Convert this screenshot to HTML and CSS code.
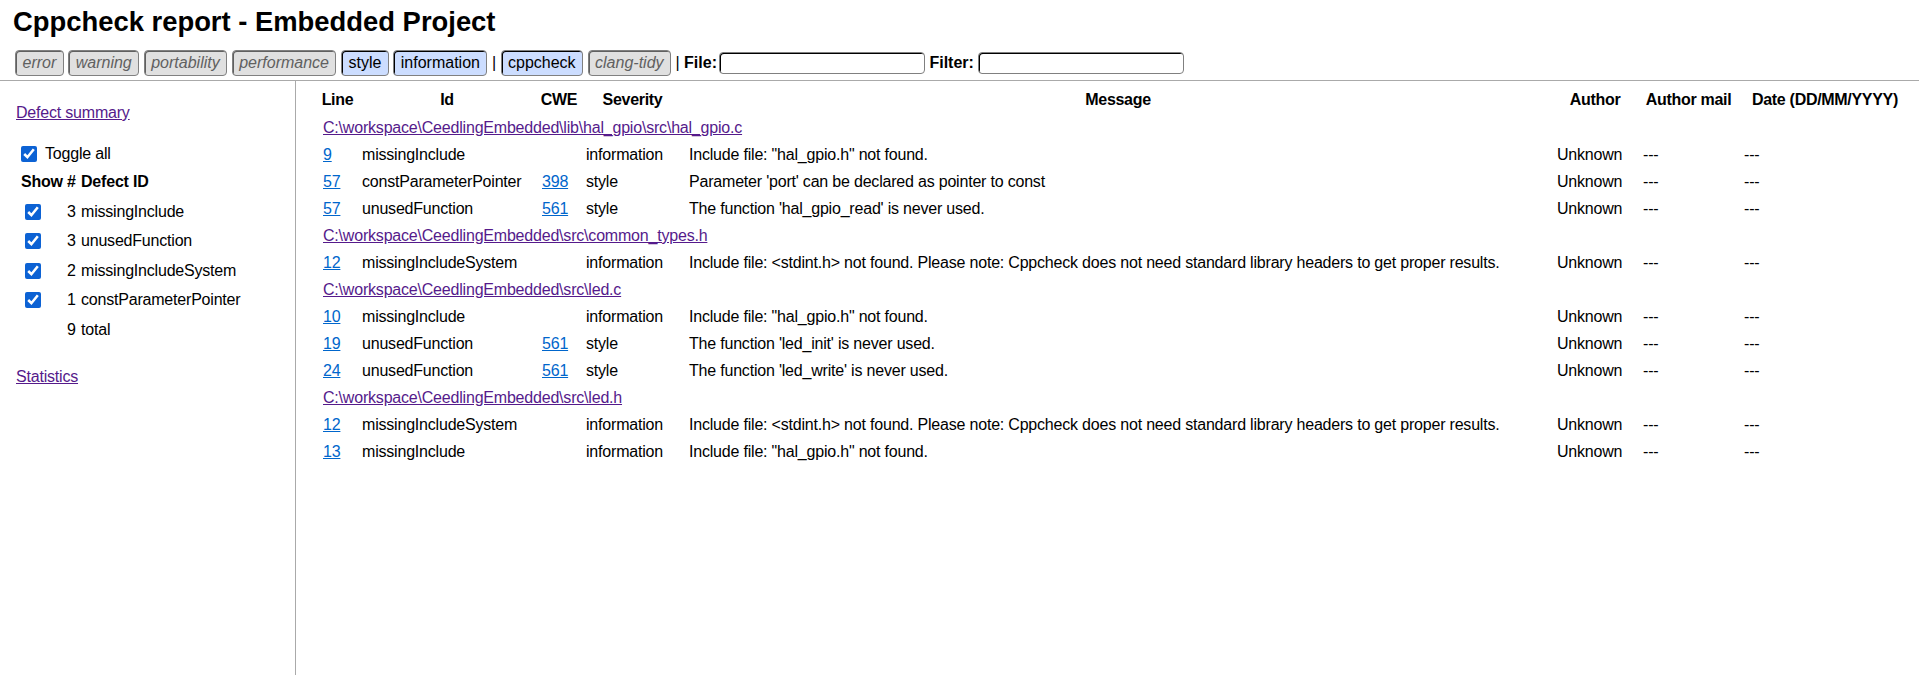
FILE: index.html
```html
<!DOCTYPE html>
<html lang="en">
<head>
<meta charset="utf-8">
<title>Cppcheck report - Embedded Project</title>
<link rel="stylesheet" href="styles.css">
</head>
<body>
<div class="wrapper">
  <header class="header">
    <h1 class="title">Cppcheck report - Embedded Project</h1>
    <div class="toolbar"><label class="check-btn disabled">error</label> <label class="check-btn disabled">warning</label> <label class="check-btn disabled">portability</label> <label class="check-btn disabled">performance</label> <label class="check-btn">style</label> <label class="check-btn">information</label> | <label class="check-btn">cppcheck</label> <label class="check-btn disabled">clang-tidy</label> | <label class="field-label">File:<input class="text-input" type="text"></label> <label class="field-label">Filter:<input class="text-input" type="text"></label></div>
  </header>

  <nav class="menu">
    <p class="menu-link"><a class="visited" href="#summary">Defect summary</a></p>
    <div class="toggle-row"><input class="check" type="checkbox" checked><span>Toggle all</span></div>
    <table class="defects">
      <colgroup><col class="d-col1"><col class="d-col2"><col class="d-col3"></colgroup>
      <tr class="d-head"><th>Show</th><th>#</th><th>Defect ID</th></tr>
      <tr class="d-row"><td><input class="check" type="checkbox" checked></td><td>3</td><td>missingInclude</td></tr>
      <tr class="d-row"><td><input class="check" type="checkbox" checked></td><td>3</td><td>unusedFunction</td></tr>
      <tr class="d-row"><td><input class="check" type="checkbox" checked></td><td>2</td><td>missingIncludeSystem</td></tr>
      <tr class="d-row"><td><input class="check" type="checkbox" checked></td><td>1</td><td>constParameterPointer</td></tr>
      <tr class="d-row"><td></td><td>9</td><td>total</td></tr>
    </table>
    <p class="menu-link stats"><a class="visited" href="#stats">Statistics</a></p>
  </nav>

  <main class="content">
    <table class="report">
      <colgroup>
        <col class="c-line"><col class="c-id"><col class="c-cwe"><col class="c-sev"><col class="c-msg"><col class="c-author"><col class="c-mail"><col class="c-date">
      </colgroup>
      <thead>
        <tr class="head-row"><th>Line</th><th>Id</th><th>CWE</th><th>Severity</th><th>Message</th><th>Author</th><th>Author mail</th><th>Date (DD/MM/YYYY)</th></tr>
      </thead>
      <tbody>
        <tr class="file-row"><td colspan="8"><a class="visited" href="#f0">C:\workspace\CeedlingEmbedded\lib\hal_gpio\src\hal_gpio.c</a></td></tr>
        <tr><td><a class="num" href="#l9">9</a></td><td>missingInclude</td><td></td><td>information</td><td>Include file: "hal_gpio.h" not found.</td><td>Unknown</td><td>---</td><td>---</td></tr>
        <tr><td><a class="num" href="#l57">57</a></td><td>constParameterPointer</td><td><a class="num" href="#cwe398">398</a></td><td>style</td><td>Parameter 'port' can be declared as pointer to const</td><td>Unknown</td><td>---</td><td>---</td></tr>
        <tr><td><a class="num" href="#l57b">57</a></td><td>unusedFunction</td><td><a class="num" href="#cwe561">561</a></td><td>style</td><td>The function 'hal_gpio_read' is never used.</td><td>Unknown</td><td>---</td><td>---</td></tr>
        <tr class="file-row"><td colspan="8"><a class="visited" href="#f1">C:\workspace\CeedlingEmbedded\src\common_types.h</a></td></tr>
        <tr><td><a class="num" href="#l12">12</a></td><td>missingIncludeSystem</td><td></td><td>information</td><td>Include file: &lt;stdint.h&gt; not found. Please note: Cppcheck does not need standard library headers to get proper results.</td><td>Unknown</td><td>---</td><td>---</td></tr>
        <tr class="file-row"><td colspan="8"><a class="visited" href="#f2">C:\workspace\CeedlingEmbedded\src\led.c</a></td></tr>
        <tr><td><a class="num" href="#l10">10</a></td><td>missingInclude</td><td></td><td>information</td><td>Include file: "hal_gpio.h" not found.</td><td>Unknown</td><td>---</td><td>---</td></tr>
        <tr><td><a class="num" href="#l19">19</a></td><td>unusedFunction</td><td><a class="num" href="#cwe561b">561</a></td><td>style</td><td>The function 'led_init' is never used.</td><td>Unknown</td><td>---</td><td>---</td></tr>
        <tr><td><a class="num" href="#l24">24</a></td><td>unusedFunction</td><td><a class="num" href="#cwe561c">561</a></td><td>style</td><td>The function 'led_write' is never used.</td><td>Unknown</td><td>---</td><td>---</td></tr>
        <tr class="file-row"><td colspan="8"><a class="visited" href="#f3">C:\workspace\CeedlingEmbedded\src\led.h</a></td></tr>
        <tr><td><a class="num" href="#l12b">12</a></td><td>missingIncludeSystem</td><td></td><td>information</td><td>Include file: &lt;stdint.h&gt; not found. Please note: Cppcheck does not need standard library headers to get proper results.</td><td>Unknown</td><td>---</td><td>---</td></tr>
        <tr><td><a class="num" href="#l13">13</a></td><td>missingInclude</td><td></td><td>information</td><td>Include file: "hal_gpio.h" not found.</td><td>Unknown</td><td>---</td><td>---</td></tr>
      </tbody>
    </table>
  </main>
</div>
</body>
</html>
```

FILE: styles.css
```css
html, body {
  margin: 0;
  padding: 0;
  height: 100%;
  overflow: hidden;
  background: #fff;
}

body {
  font-family: "Liberation Sans", Arial, sans-serif;
  font-size: 16px;
  color: #000;
}

.wrapper {
  display: grid;
  grid-template-columns: 296px 1fr;
  grid-template-rows: 81px 1fr;
  height: 100vh;
  width: 100vw;
}

/* ---------- header ---------- */
.header {
  grid-column: 1 / 3;
  box-sizing: border-box;
  border-bottom: 1px solid #aaa;
  padding: 2px 0 0 15px;
}

.title {
  margin: 0 0 8px -2px;
  font-size: 27.4px;
  line-height: 40px;
  height: 40px;
  font-weight: bold;
}

.toolbar {
  height: 26px;
  line-height: 26px;
  white-space: nowrap;
}

.check-btn {
  display: inline-block;
  vertical-align: top;
  box-sizing: border-box;
  height: 26px;
  line-height: 22px;
  padding: 1px 6.5px;
  border: 1px solid grey;
  border-radius: 4px;
  box-shadow: 1px 1px inset;
  background: #ccddff;
  color: #000;
}

.check-btn.disabled {
  color: #606060;
  background: #e0e0e0;
  font-style: italic;
}

.field-label {
  font-weight: bold;
}

.text-input {
  display: inline-block;
  vertical-align: top;
  box-sizing: border-box;
  width: 206px;
  height: 22px;
  margin: 2px 0 0 2px;
  padding: 1px 5px;
  border: 1px solid grey;
  border-radius: 4px;
  box-shadow: 1px 1px inset #000;
  font: 16px "Liberation Sans", Arial, sans-serif;
  background: #fff;
}

.text-input + .text-input,
.field-label + .field-label .text-input {
  margin-left: 4px;
}

/* ---------- menu ---------- */
.menu {
  box-sizing: border-box;
  border-right: 1px solid #aaa;
  padding: 0 16px;
  overflow: hidden;
  letter-spacing: -0.2px;
}

.menu-link {
  margin: 20px 0 0 0;
  line-height: 24px;
}

.menu-link.stats {
  margin-top: 20px;
}

a.visited {
  color: #551a8b;
}

a.num {
  color: #0066cc;
}

.toggle-row {
  display: flex;
  align-items: center;
  height: 24px;
  margin-top: 17px;
  padding-left: 5px;
}

.check {
  width: 16px;
  height: 16px;
  margin: 0;
  accent-color: #0c62d4;
}

.toggle-row .check {
  margin-right: 8px;
}

.defects {
  border-collapse: collapse;
  margin: 1px 0 0 2px;
  table-layout: fixed;
}

.d-col1 { width: 47px; }
.d-col2 { width: 14px; }
.d-col3 { width: 200px; }

.defects th,
.defects td {
  padding: 0 0 0 2px;
  text-align: left;
  white-space: nowrap;
  vertical-align: middle;
  line-height: 20px;
}

.defects th:first-child,
.defects td:first-child {
  padding-left: 3px;
}

.defects td:first-child .check {
  display: block;
  margin-left: 4px;
}

.d-head {
  height: 30px;
}

.d-head th {
  font-weight: bold;
}

.d-row {
  height: 29.5px;
}

/* ---------- content ---------- */
.content {
  padding: 5px 8px 15px 22px;
  overflow: hidden;
}

.report {
  border-collapse: collapse;
  table-layout: fixed;
  width: 1593px;
}

.c-line { width: 39px; }
.c-id { width: 180px; }
.c-cwe { width: 44px; }
.c-sev { width: 103px; }
.c-msg { width: 868px; }
.c-author { width: 86px; }
.c-mail { width: 101px; }
.c-date { width: 172px; }

.report th {
  font-weight: bold;
  text-align: center;
  padding: 0 2px;
  white-space: nowrap;
  line-height: 20px;
  letter-spacing: -0.3px;
}

.report td {
  padding: 0 5px;
  text-align: left;
  white-space: nowrap;
  line-height: 20px;
  vertical-align: middle;
  letter-spacing: -0.2px;
}

.head-row {
  height: 28px;
}

.report tbody tr {
  height: 27px;
}
```
